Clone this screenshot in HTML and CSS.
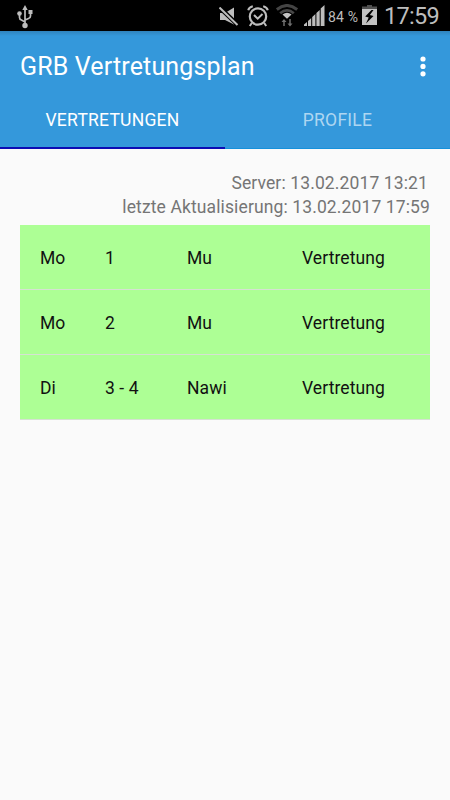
FILE: index.html
```html
<!DOCTYPE html>
<html lang="de">
<head>
<meta charset="utf-8">
<title>GRB Vertretungsplan</title>
<link rel="stylesheet" href="styles.css">
</head>
<body>
<div class="status">
  <svg class="usb" width="18" height="24" viewBox="0 0 18 24">
    <path d="M9 4v17M3.500 9v3.500q0 2 2 2.500L9 17M14.500 8v3q0 2-2 2.500L9 15" fill="none" stroke="#bdbdbd" stroke-width="1.700"/>
    <path d="M9 0l2.700 5H6.300zM12.500 5h4v4h-4z" fill="#bdbdbd"/>
    <circle cx="3.500" cy="8.500" r="2.300" fill="#bdbdbd"/><circle cx="9" cy="20.500" r="2.700" fill="#bdbdbd"/>
  </svg>
  <svg class="mute" width="20" height="20" viewBox="0 0 20 20">
    <path d="M1 6h5l9-5.500v17L6 13H1z" fill="#bdbdbd"/>
    <path d="M0 0l20 19" stroke="#000" stroke-width="4.500"/>
    <path d="M.5 .5L18.500 18" stroke="#bdbdbd" stroke-width="2"/>
  </svg>
  <svg class="alarm" width="22" height="22" viewBox="0 0 22 22" fill="none" stroke="#bdbdbd">
    <circle cx="11" cy="11.500" r="8.200" stroke-width="2.200"/>
    <path d="M1.200 5.200Q2 2 5.800 1.200M16.200 1.200Q20 2 20.800 5.200M4.800 18l-2 3M17.200 18l2 3" stroke-width="2"/>
    <path d="M7 10l3.700 3.700L15.500 9" stroke-width="2"/>
  </svg>
  <svg class="wifi" width="22" height="24" viewBox="0 0 22 24" fill="none">
    <path d="M.8 5.500Q11-2.500 21.200 5.500" stroke="#444" stroke-width="3"/>
    <path d="M4.200 9.200Q11 3.500 17.800 9.200" stroke="#484848" stroke-width="2.800"/>
    <path d="M6.500 10.500Q11 7 15.500 10.500L11 14.800z" fill="#c4c4c4"/>
    <path d="M8 22v-6M14 15v6" stroke="#707070" stroke-width="1.500"/>
    <path d="M5.500 18L8 15l2.500 3zM11.500 19.500L14 22.500l2.500-3z" fill="#707070"/>
  </svg>
  <svg class="signal" width="21" height="21" viewBox="0 0 21 21" fill="#bdbdbd">
    <path d="M0 21v-1.500l3-2.500v4zM4 21v-5l3.200-3v8zM8.200 21v-9l3.200-3v12zM12.400 21V8l3.300-3v16zM16.700 21V3.500L20.500 0v21z"/>
  </svg>
  <span class="percent">84 %</span>
  <svg class="battery" width="15" height="20" viewBox="0 0 15 20">
    <path d="M5 0h5v1.500h5V4H0V1.500h5z" fill="#505050"/><path d="M0 4h15v16H0z" fill="#c2c2c2"/>
    <path d="M9.500 5L3.200 11.500l3.500 1L4 18.500l7.500-7.500-3.600-1L11.500 5z" fill="#000"/>
  </svg>
  <span class="clock">17:59</span>
</div>
<header class="header">
  <div class="toolbar">
    <h1 class="title">GRB Vertretungsplan</h1>
    <svg class="more" width="6" height="21" viewBox="0 0 6 21" fill="#fff"><circle cx="3" cy="3" r="2.600"/><circle cx="3" cy="10.400" r="2.600"/><circle cx="3" cy="17.800" r="2.600"/></svg>
  </div>
  <nav class="tabs"><div class="tab active">VERTRETUNGEN</div><div class="tab">PROFILE</div></nav>
</header>
<main class="content">
  <div class="info"><div class="server">Server: 13.02.2017 13:21</div><div>letzte Aktualisierung: 13.02.2017 17:59</div></div>
  <div class="list">
    <div class="row"><span>Mo</span><span>1</span><span>Mu</span><span>Vertretung</span></div>
    <div class="row"><span>Mo</span><span>2</span><span>Mu</span><span>Vertretung</span></div>
    <div class="row"><span>Di</span><span>3 - 4</span><span>Nawi</span><span>Vertretung</span></div>
  </div>
</main>
</body>
</html>
```
FILE: styles.css
```css
* { box-sizing: border-box; }
body { margin: 0; min-height: 800px; background: #fafafa; font-family: Roboto, sans-serif; }
svg { display: block; flex: none; }
.status { height: 31px; background: #000; display: flex; align-items: flex-start; padding-left: 16px; color: #bdbdbd; white-space: nowrap; }
.usb { margin-top: 5px; }
.mute { margin: 7px 0 0 185px; }
.alarm { margin: 5px 0 0 8px; }
.wifi { margin: 4px 0 0 7px; }
.signal { margin: 5px 0 0 6px; }
.percent { margin: 7px 0 0 3px; width: 34px; font-size: 14px; line-height: 20px; letter-spacing: 0.2px; }
.battery { margin-top: 5px; }
.clock { margin: 2px 0 0 7px; font-size: 23.5px; line-height: 28px; letter-spacing: -0.7px; }
.header { height: 118px; background: linear-gradient(#2f83bd, #3498db 5px); border-bottom: 1px solid #1591dc; }
.toolbar { height: 70px; display: flex; align-items: center; justify-content: space-between; padding: 0 24px 0 20px; }
.title { margin: 0; padding-top: 2px; font-size: 25px; line-height: 30px; font-weight: 400; letter-spacing: 0.15px; color: #fff; }
.tabs { display: flex; height: 48px; }
.tab { flex: 1; display: flex; justify-content: center; padding-top: 7px; font-size: 17.5px; line-height: 24px; letter-spacing: 0.24px; color: #aed6f1; }
.active { color: #fff; border-bottom: 2px solid #0c0cb4; }
.content { padding: 22px 20px 0; }
.info { height: 54px; font-size: 17.5px; line-height: 24px; letter-spacing: 0.12px; color: #757575; text-align: right; white-space: nowrap; }
.server { padding-right: 2px; }
.list { background: #adff95; }
.row { height: 65px; display: grid; grid-template-columns: 65px 82px 115px 1fr; align-items: center; padding: 2px 0 0 20px; font-size: 17.5px; line-height: 24px; letter-spacing: 0.08px; color: #111; border-bottom: 1px solid #d6e1d3; }
```
